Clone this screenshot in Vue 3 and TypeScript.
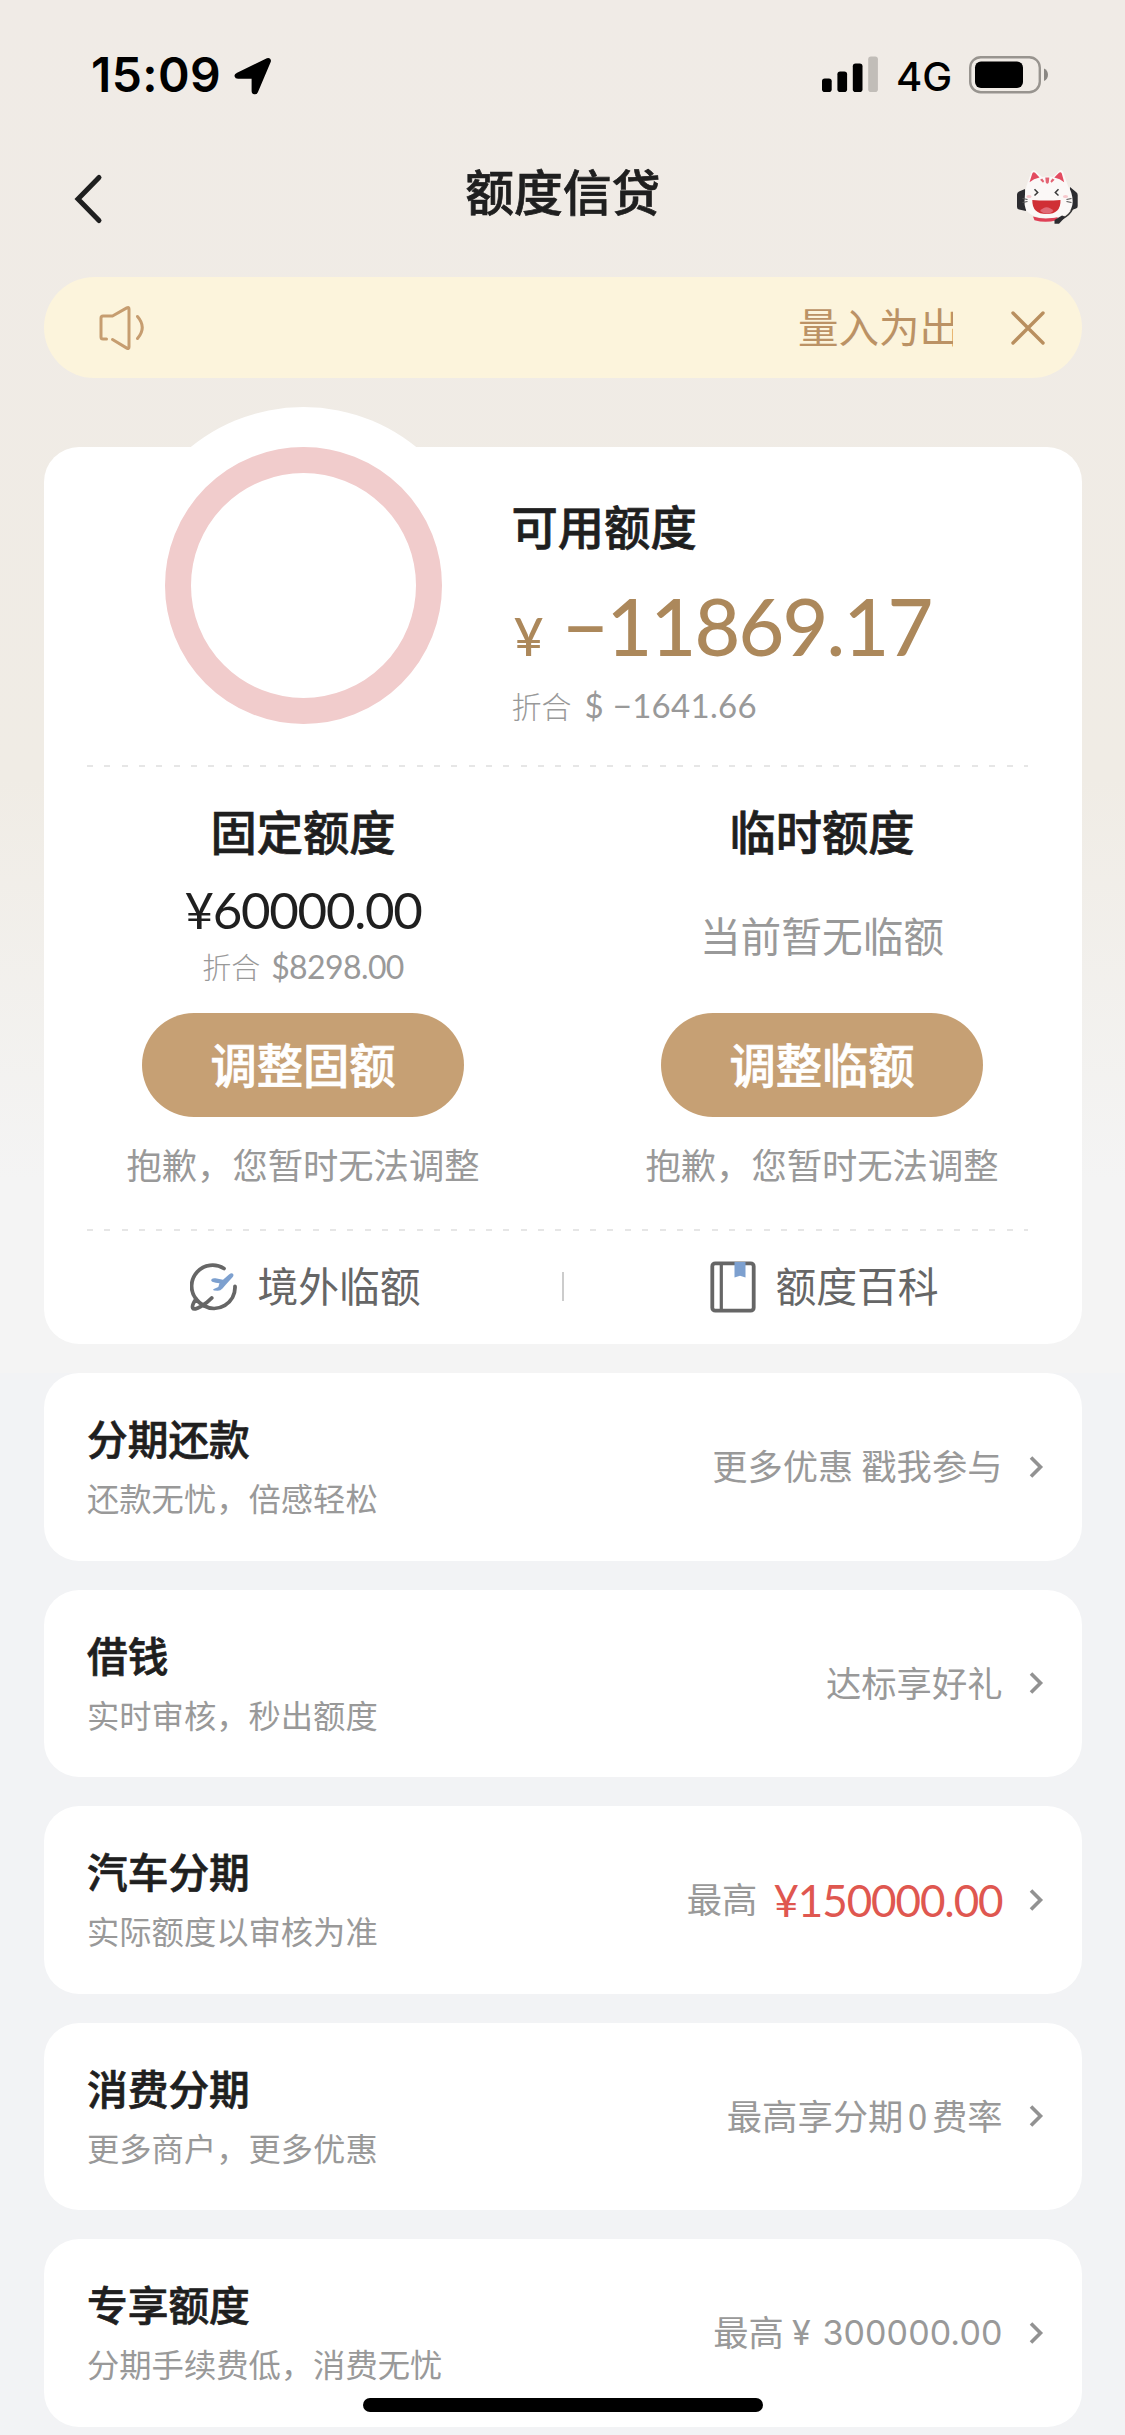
<script setup lang="ts">
interface Offer {
  title: string
  note: string
  hint: string
  digit?: string
  tail?: string
  amount?: string
  latin?: string
}

interface Quota {
  title: string
  amount?: string
  equivalent?: string
  empty?: string
  action: string
}

const quotas: Quota[] = [
  { title: '固定额度', amount: '¥60000.00', equivalent: '$8298.00', action: '调整固额' },
  { title: '临时额度', empty: '当前暂无临额', action: '调整临额' },
]

const offers: Offer[] = [
  { title: '分期还款', note: '还款无忧，倍感轻松', hint: '更多优惠 戳我参与' },
  { title: '借钱', note: '实时审核，秒出额度', hint: '达标享好礼' },
  { title: '汽车分期', note: '实际额度以审核为准', hint: '最高', amount: '¥150000.00' },
  { title: '消费分期', note: '更多商户，更多优惠', hint: '最高享分期', digit: '0', tail: '费率' },
  { title: '专享额度', note: '分期手续费低，消费无忧', hint: '最高', latin: '¥ 300000.00' },
]
</script>

<template>
  <div class="screen">
    <header class="status">
      <div class="status-left">
        <span class="time">15:09</span>
        <svg class="locate" width="38" height="38" viewBox="0 0 38 38">
          <path d="M3.2 17.2 33.5 2.6c1.3-.6 2.4.5 1.9 1.8L22.6 34.6c-.9 2-3.6 1.6-3.6-.6V21.2c0-.6-.3-.9-.9-.9H4c-2.3 0-2.8-2.2-.8-3.1z" fill="#000" stroke="#000" stroke-width="2.8" stroke-linejoin="round" />
        </svg>
      </div>
      <div class="status-right">
        <svg class="signal" width="56" height="36" viewBox="0 0 56 36">
          <rect x="0" y="22.5" width="9.7" height="13.5" rx="2.8" />
          <rect x="15.4" y="15.5" width="9.7" height="20.5" rx="2.8" />
          <rect x="30.8" y="7.5" width="9.7" height="28.5" rx="2.8" />
          <rect x="46.2" y="0.5" width="9.7" height="35.5" rx="2.8" fill="#c1bdb8" />
        </svg>
        <span class="network">4G</span>
        <svg class="battery" width="80" height="38" viewBox="0 0 80 38">
          <rect x="1.2" y="1.2" width="69.6" height="35" rx="10.5" fill="none" stroke="#98948f" stroke-width="2.4" />
          <rect x="6" y="5.5" width="48" height="26.5" rx="6" />
          <path d="M75 12.5c5.3 2.3 5.3 10.2 0 12.5z" fill="#8a8783" />
        </svg>
      </div>
    </header>

    <nav class="nav">
      <svg class="back" width="30" height="52" viewBox="0 0 30 52">
        <path d="M25 4.5 4 26 25 47.5" fill="none" stroke="#1f1f1f" stroke-width="5" stroke-linecap="round" stroke-linejoin="miter" />
      </svg>
      <h1>额度信贷</h1>
      <svg class="mascot" width="62" height="56" viewBox="0 0 62 56">
        <path d="M8 20 2 22.500q-2 1-2 3V38q0 2 2 2.500l7 1.500zM53 18l6 5q1.700 1.200 1.700 3V37q0 2-1.700 2.500L52 42z" fill="#2c2c30" />
        <path d="M16 47.500q13 4 25 0l-1.500 3.800q-11 3-22 0z" fill="#df4056" />
        <path d="M9.500 17 14.300 3Q15.500.3 18 1.500L25 8q6-1.200 11 0l6.500-6.500q2.200-1.200 3.500 1.200L51 17q4.700 7 4.700 15.500 0 16.500-24.500 16.500T7.500 32.500Q7.500 24 9.500 17z" fill="#fbf8f7" />
        <path d="M12.500 13.200 15.300 4.500q1-2 2.800-.8L22.500 8.500q-5.800 1-10 4.700zM47.200 13.200 44.800 4.500q-1-2-2.800-.8L37.300 8.500q5.800 1 9.900 4.700z" fill="#e34b60" />
        <path d="M28.300 8.500h4l-.5 5q-1.500 2.500-3 0zM23 10.800l2.200-1.300 2 2.700-1.200 1.500zM37.600 10.800l-2.200-1.300-2 2.700 1.200 1.500z" fill="#e36272" />
        <path d="M17.500 20.300l3.200 3.200-3.200 3M41.500 20.300l-3.200 3.200 3.200 3" fill="none" stroke="#3a3a3a" stroke-width="1.5" />
        <ellipse cx="12" cy="27.5" rx="2.6" ry="1.5" fill="#f7c8cd" />
        <ellipse cx="48.5" cy="27.5" rx="2.6" ry="1.5" fill="#f7c8cd" />
        <path d="M5.500 29.500l5 1M5.500 33.500l5-1M54.500 29.500l-5 1M54.500 33.500l-5-1" fill="none" stroke="#555" stroke-width="1.1" />
        <path d="M15.300 31q14 1.200 28.200 0 .5 14-14 14T15.300 31z" fill="#d02f35" />
        <path d="M23 42q6.500-7.500 13.500 0-6.500 5.500-13.500 0z" fill="#e06a76" />
        <path d="M56 39q-3 7-11 11" fill="none" stroke="#333" stroke-width="1.5" />
        <path d="M37.500 54.800V51l7.500-4.500 3.500 1.200-6.500 7.100z" fill="#2c2c30" />
      </svg>
    </nav>

    <div class="notice">
      <svg class="speaker" width="48" height="46" viewBox="0 0 48 46" fill="none" stroke="#c69d70" stroke-width="3" stroke-linecap="round" stroke-linejoin="round">
        <path d="M7.500 34H4Q2 34 2 32V13q0-2 2-2h9.500L27.800 2.900q2.200-1.200 2.200 1.100V42q0 2.300-2.200 1.100L13.500 34.500" />
        <path d="M38.500 11.500q9.500 11 0 22" />
      </svg>
      <div class="ticker">量入为出</div>
      <svg class="close" width="36" height="36" viewBox="0 0 36 36">
        <path d="M3 3 33 33M33 3 3 33" stroke="#b98f5f" stroke-width="3.4" stroke-linecap="round" />
      </svg>
    </div>

    <section class="summary">
      <div class="available">
        <div class="gauge"><div class="ring"></div></div>
        <div class="available-text">
          <h2>可用额度</h2>
          <div class="balance"><span class="yuan">¥</span><span class="figure">−11869.17</span></div>
          <div class="approx"><span class="thin">折合</span><span class="usd">$ −1641.66</span></div>
        </div>
      </div>
      <div class="rule"></div>
      <div class="quotas">
        <div v-for="q in quotas" :key="q.title" class="quota">
          <h2>{{ q.title }}</h2>
          <div class="quota-body">
            <template v-if="q.amount">
              <div class="quota-amount">{{ q.amount }}</div>
              <div class="quota-usd"><span class="thin">折合</span><span class="usd">{{ q.equivalent }}</span></div>
            </template>
            <div v-else class="quota-empty">{{ q.empty }}</div>
          </div>
          <button type="button">{{ q.action }}</button>
          <p>抱歉，您暂时无法调整</p>
        </div>
      </div>
      <div class="rule"></div>
      <div class="links">
        <div class="link">
          <svg width="48" height="50" viewBox="0 0 48 50" fill="none" stroke="#666" stroke-width="3.8" stroke-linecap="round" stroke-linejoin="round">
            <path d="M34 6.500A21 21 0 0 0 6 37M45 24.500A21 21 0 0 1 13.500 43.500" />
            <path d="M6 37Q1.500 43.500 2.800 46T11 44.300Q17 41 21.700 36M6 37Q9.500 41.500 13.500 43.500" />
            <path d="M21.500 17.200q1.500-1.300 4-.9l7.500 1.400 6-5.200q2.500-2 3.900-.8 1.400 1.400-.6 3.800L35.500 23l-3 3.500q-2 2.300-5 2.200l-3.500-.2q-2-.8.3-1.700l4-1.800 1.200-3.800q-4-.2-7.300-1.500-1.600-1-.7-2.500z" fill="#7da0cf" stroke="none" />
          </svg>
          <span>境外临额</span>
        </div>
        <i class="bar"></i>
        <div class="link">
          <svg width="46" height="52" viewBox="0 0 46 52" fill="none" stroke="#666" stroke-width="3.8">
            <rect x="2.3" y="2.3" width="41.4" height="47.4" rx="3" />
            <path d="M11.300 2.500V49.500" stroke-width="3.2" />
            <path d="M24.500 1h11v15.500l-5.500-1.800-5.500 1.800z" fill="#7da0cf" stroke="none" />
          </svg>
          <span>额度百科</span>
        </div>
      </div>
    </section>

    <section v-for="o in offers" :key="o.title" class="offer">
      <div class="offer-main">
        <h3>{{ o.title }}</h3>
        <p>{{ o.note }}</p>
      </div>
      <div class="offer-side">
        <span class="hint">{{ o.hint }}<span v-if="o.digit" class="digit">{{ o.digit }}</span>{{ o.tail }}</span>
        <span v-if="o.amount" class="offer-amount">{{ o.amount }}</span>
        <span v-if="o.latin" class="offer-latin">{{ o.latin }}</span>
        <svg class="chevron" width="16" height="24" viewBox="0 0 16 24">
          <path d="M3 2.500 12.500 12 3 21.500" fill="none" stroke="#929292" stroke-width="3.6" />
        </svg>
      </div>
    </section>
    <div class="home"></div>
  </div>
</template>

<style>
body {
  margin: 0;
  background: #f2f3f5;
}
</style>

<style scoped>
.screen {
  position: relative;
  box-sizing: border-box;
  width: 1125px;
  height: 2435px;
  padding: 0 43.5px;
  overflow: hidden;
  color: #1f1f1f;
  font-family: 'Noto Sans CJK SC', sans-serif;
  background: linear-gradient(#f0ebe6 0, #f0ece5 780px, #f4f4f4 1180px, #f4f4f4 1373px, #f2f3f5 1373px);
}
h1, h2, h3, p {
  margin: 0;
}
h1, h2, h3, button {
  -webkit-text-stroke: 0.7px currentColor;
}
.status {
  display: flex;
  justify-content: space-between;
  height: 150px;
  margin: 0 -43.5px;
  padding: 0 76px 0 91px;
}
.status-left, .status-right {
  display: flex;
  align-items: flex-start;
}
.time {
  margin-top: 45px;
  width: 143px;
  color: #000;
  font: 600 48px/60px Inter, sans-serif;
  letter-spacing: 0.4px;
}
.locate {
  margin-top: 57px;
}
.signal {
  margin-top: 56px;
}
.network {
  margin: 52px 0 0 18px;
  width: 73px;
  color: #000;
  font: 500 40px/50px Inter, sans-serif;
}
.battery {
  margin-top: 56px;
}
.nav {
  display: flex;
  justify-content: space-between;
  height: 127px;
  margin-right: -38.5px;
}
.back {
  margin: 23px 0 0 30px;
}
.nav h1 {
  margin: 5px 0 0 5px;
  font-size: 48.8px;
  line-height: 70px;
  font-weight: 500;
}
.mascot {
  margin: 19px 41px 0 0;
}
.notice {
  display: flex;
  align-items: center;
  box-sizing: border-box;
  height: 101px;
  padding: 0 35.5px 0 55px;
  border-radius: 51px;
  background: #fcf4dc;
}
.ticker {
  width: 155px;
  margin: -3px 0 0 auto;
  overflow: hidden;
  color: #bb9265;
  font-size: 40.5px;
  line-height: 60px;
  white-space: nowrap;
}
.close {
  margin-left: 57px;
}
.summary {
  box-sizing: border-box;
  height: 897px;
  margin-top: 69px;
  border-radius: 35px;
  background: #fff;
}
.available {
  display: flex;
  height: 318px;
}
.gauge {
  display: flex;
  flex: none;
  align-items: center;
  justify-content: center;
  width: 357px;
  height: 357px;
  margin: -40px 0 0 81px;
  border-radius: 50%;
  background: #fff;
}
.ring {
  box-sizing: border-box;
  width: 277px;
  height: 277px;
  border: 26px solid #f1cccc;
  border-radius: 50%;
}
.available-text {
  padding: 46px 0 0 30px;
}
h2 {
  font-size: 46.3px;
  line-height: 64px;
  font-weight: 500;
}
.balance {
  display: flex;
  align-items: baseline;
  height: 88px;
  margin-top: 25px;
  color: #ac885b;
  font-family: Lato, sans-serif;
  font-weight: 500;
  line-height: 88px;
  font-kerning: none;
}
.yuan {
  width: 49px;
  padding-left: 2px;
  font-size: 52px;
}
.figure {
  font-size: 79px;
  letter-spacing: -1.8px;
}
.approx {
  display: flex;
  align-items: center;
  height: 44px;
  margin-top: 13px;
  color: #999;
}
.thin {
  font-size: 30px;
  font-weight: 300;
}
.usd {
  margin-left: 13px;
  font-family: Lato, sans-serif;
  font-size: 33px;
  letter-spacing: 0.3px;
  font-kerning: none;
}
.rule {
  height: 2px;
  width: 941px;
  margin-left: 43px;
  background: repeating-linear-gradient(90deg, #e6e6e6 0 6px, transparent 6px 17.35px);
}
.quotas {
  display: flex;
  height: 462px;
}
.quota {
  flex: 1;
  text-align: center;
}
.quota h2 {
  margin-top: 31px;
}
.quota-body {
  height: 151px;
}
.quota-amount {
  padding-top: 18px;
  font: 400 51px/60px Lato, sans-serif;
  letter-spacing: -1.3px;
  font-kerning: none;
}
.quota-usd {
  display: flex;
  align-items: center;
  justify-content: center;
  height: 42px;
  margin-top: 5px;
  color: #999;
}
.quota-usd .thin {
  font-size: 29px;
}
.quota-usd .usd {
  margin-left: 11px;
  font-size: 32px;
  letter-spacing: -0.6px;
}
.quota-empty {
  padding-top: 43px;
  color: #999;
  font-size: 40.7px;
  line-height: 60px;
}
button {
  display: block;
  width: 322.5px;
  height: 104px;
  margin: 0 auto;
  padding: 0 0 4px;
  border: 0;
  border-radius: 52px;
  color: #fff;
  background: #c6a074;
  font: 500 46.3px/98px 'Noto Sans CJK SC', sans-serif;
}
.quota p {
  margin-top: 21px;
  color: #999;
  font-size: 35.3px;
  line-height: 52px;
}
.links {
  display: flex;
  align-items: center;
  height: 111px;
}
.link {
  display: flex;
  flex: 1;
  align-items: center;
  justify-content: center;
  gap: 19px;
  padding-left: 5px;
  color: #666;
  font-size: 40.8px;
  line-height: 56px;
}
.link span {
  margin-top: -4px;
}
.bar {
  width: 2px;
  height: 29px;
  margin: 0 -1px;
  background: #ccc;
}
.offer {
  display: flex;
  justify-content: space-between;
  height: 187.5px;
  margin-top: 29px;
  border-radius: 35px;
  background: #fff;
}
.offer-main {
  padding: 38px 0 0 43.5px;
}
h3 {
  font-size: 40.7px;
  line-height: 54px;
  font-weight: 500;
}
.offer p {
  margin-top: 10px;
  color: #999;
  font-size: 32.3px;
  line-height: 44px;
}
.offer-side {
  display: flex;
  align-items: center;
  padding-right: 38px;
  color: #999;
  font-size: 35.3px;
}
.hint {
  margin-top: -4px;
}
.digit {
  margin: 0 4.5px;
}
.offer-amount {
  margin-left: 16px;
  color: #df5750;
  font: 400 44px/60px Lato, sans-serif;
  letter-spacing: -1.1px;
  font-kerning: none;
}
.offer-latin {
  margin-left: 8px;
  font: 400 34px/50px Inter, sans-serif;
  letter-spacing: 0.1px;
  word-spacing: 2px;
}
.chevron {
  margin-left: 25px;
}
.home {
  position: absolute;
  left: 363px;
  bottom: 23px;
  width: 400px;
  height: 14.5px;
  border-radius: 8px;
  background: #000;
}
</style>
